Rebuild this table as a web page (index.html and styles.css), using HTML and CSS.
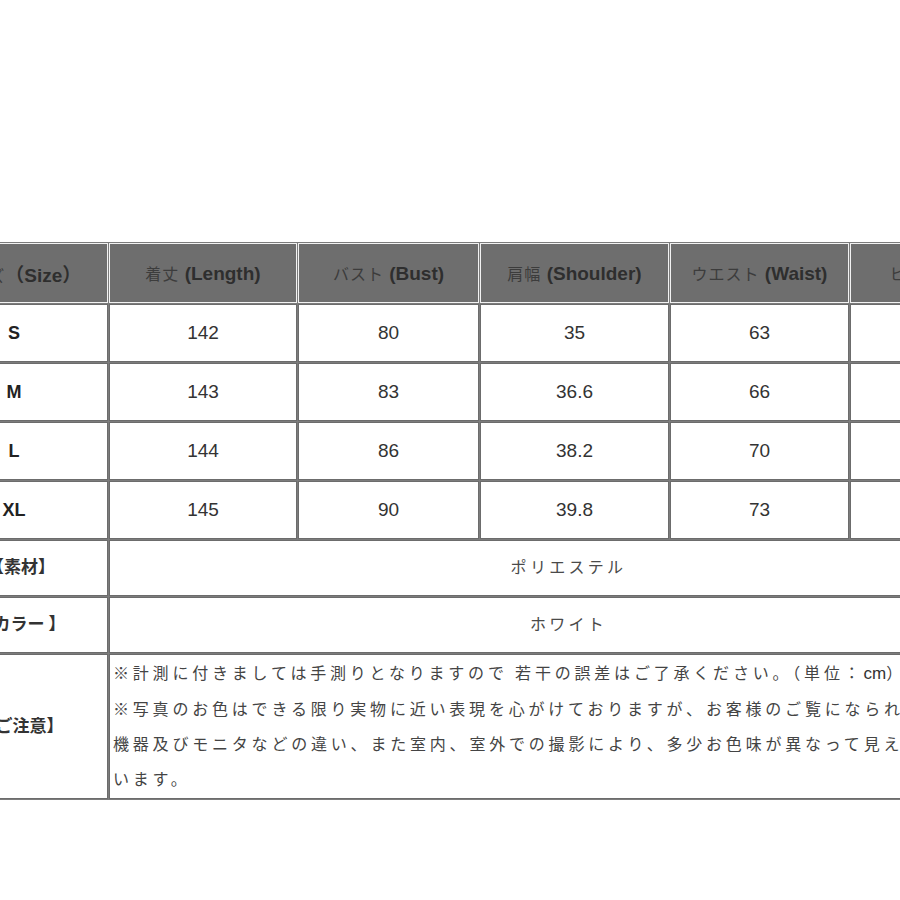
FILE: index.html
```html
<!DOCTYPE html>
<html lang="ja">
<head>
<meta charset="utf-8">
<title>サイズ表</title>
<link rel="stylesheet" href="styles.css">
</head>
<body>
<div class="viewport">
  <table class="size-table">
    <thead>
      <tr>
        <th class="c1"><span class="jp">サイズ</span>（Size）</th>
        <th class="c2"><span class="jp">着丈</span> (Length)</th>
        <th class="c3"><span class="jp">バスト</span> (Bust)</th>
        <th class="c4"><span class="jp">肩幅</span> (Shoulder)</th>
        <th class="c5"><span class="jp">ウエスト</span> (Waist)</th>
        <th class="c6"><span class="jp">ヒップ</span> (Hip)</th>
      </tr>
    </thead>
    <tbody>
      <tr class="size-row">
        <td class="size">S</td><td>142</td><td>80</td><td>35</td><td>63</td><td></td>
      </tr>
      <tr class="size-row">
        <td class="size">M</td><td>143</td><td>83</td><td>36.6</td><td>66</td><td></td>
      </tr>
      <tr class="size-row">
        <td class="size">L</td><td>144</td><td>86</td><td>38.2</td><td>70</td><td></td>
      </tr>
      <tr class="size-row">
        <td class="size">XL</td><td>145</td><td>90</td><td>39.8</td><td>73</td><td></td>
      </tr>
      <tr class="info-row">
        <td class="label">【素材】</td>
        <td class="info" colspan="5">ポリエステル</td>
      </tr>
      <tr class="info-row">
        <td class="label">【カラー 】</td>
        <td class="info" colspan="5">ホワイト</td>
      </tr>
      <tr class="notes-row">
        <td class="label">【ご注意】</td>
        <td class="notes" colspan="5">※計測に付きましては手測りとなりますので 若干の誤差はご了承ください。（単位：<span class="latin">cm</span>）<br>※写真のお色はできる限り実物に近い表現を心がけておりますが、お客様のご覧になられている<br>機器及びモニタなどの違い、また室内、室外での撮影により、多少お色味が異なって見える場合がござ<br>います。</td>
      </tr>
    </tbody>
  </table>
</div>
</body>
</html>
```

FILE: styles.css
```css
html, body {
  margin: 0;
  padding: 0;
  background: #ffffff;
}

.viewport {
  width: 900px;
  height: 900px;
  overflow: hidden;
  padding-top: 242px;
  box-sizing: border-box;
}

.size-table {
  margin-left: -73px;
  border-collapse: separate;
  border-spacing: 1px;
  table-layout: fixed;
  width: 1102px;
  background: #7c7c7c;
  font-family: "Liberation Sans", Arial, "Noto Sans CJK JP", sans-serif;
  color: #333333;
}

.size-table th,
.size-table td {
  box-sizing: border-box;
  padding: 0;
  text-align: center;
  vertical-align: middle;
}

.size-table th {
  background: #6e6e6e;
  border: 1px solid #f2f2f2;
  height: 60px;
  font-size: 19px;
  font-weight: bold;
  color: #2e2e2e;
  white-space: nowrap;
}

.size-table th .jp {
  font-family: "Noto Sans CJK JP", sans-serif;
  font-weight: normal;
  font-size: 16px;
  letter-spacing: 1px;
  color: #3c3c3c;
}

.c1 { width: 180px; }
.c2 { width: 188px; }
.c3 { width: 181px; }
.c4 { width: 189px; }
.c5 { width: 179px; }
.c6 { width: 178px; }

.size-table td {
  border: 1px solid #6c6c6c;
  background: #ffffff;
  font-size: 19px;
}

.size-row td {
  height: 58px;
}

.size-table td.size {
  font-weight: bold;
  font-size: 18px;
  color: #222222;
  padding-right: 8px;
}

.info-row td {
  height: 56px;
  padding-bottom: 5px;
}

.size-table td.label {
  font-family: "Noto Sans CJK JP", sans-serif;
  font-weight: bold;
  font-size: 17px;
  color: #333333;
  padding-left: 6px;
}

.notes-row td.label {
  padding-bottom: 5px;
}

.size-table td.info {
  font-family: "Noto Sans CJK JP", sans-serif;
  font-size: 16px;
  letter-spacing: 3.3px;
  color: #4a4a4a;
}

.size-table td.notes {
  height: 145px;
  text-align: left;
  vertical-align: top;
  padding: 0 0 0 3px;
  font-family: "Noto Sans CJK JP", sans-serif;
  font-size: 16px;
  line-height: 35px;
  letter-spacing: 3.8px;
  white-space: nowrap;
  color: #444444;
}

.latin {
  font-family: "Liberation Sans", Arial, sans-serif;
  font-size: 17px;
  letter-spacing: 0;
  color: #333333;
}
```
